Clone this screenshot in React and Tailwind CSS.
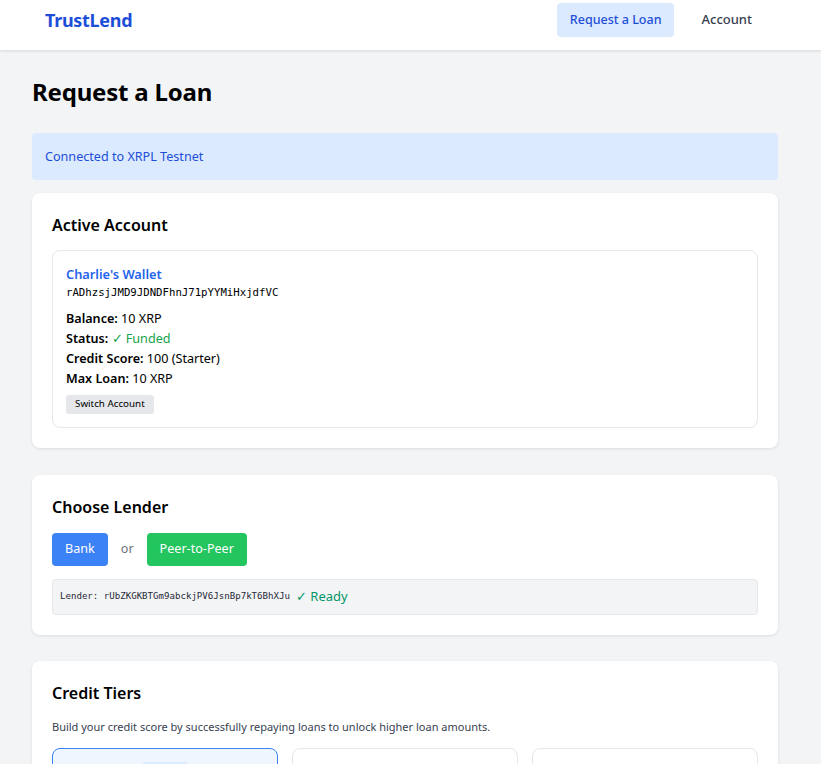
import React from "react";

export default function App() {
  const sans = { fontFamily: '"Noto Sans", "Open Sans", sans-serif' };
  return (
    <div className="min-h-[764px] bg-[#f3f4f6] text-[#111827]" style={sans}>
      <nav className="h-[50px] bg-white shadow-[0_1px_3px_rgba(0,0,0,0.12)] pl-[45px] pr-[53px] pt-[3px] flex items-start justify-between">
        <div className="h-[34px] flex items-center text-[18px] font-bold text-[#1d4ed8] tracking-[-0.3px]">TrustLend</div>
        <div className="flex items-center gap-[11px]">
          <button className="h-[34px] px-[13px] rounded-[4px] bg-[#dbeafe] text-[#1d4ed8] text-[12.5px] font-medium">Request a Loan</button>
          <button className="h-[34px] px-[16px] rounded-[4px] text-[#374151] text-[13px] font-medium">Account</button>
        </div>
      </nav>

      <main className="pl-[32px] w-[778px] pb-10">
        <h1 className="mt-[26px] text-[24px] leading-[32px] font-bold text-black tracking-[-0.2px]">Request a Loan</h1>

        <div className="mt-[25px] h-[47px] rounded-[4px] bg-[#dbeafe] px-[13px] pt-[2px] flex items-center text-[12.6px] text-[#1d4ed8]">
          Connected to XRPL Testnet
        </div>

        <section className="mt-[13px] bg-white rounded-lg shadow-[0_1px_3px_rgba(0,0,0,0.1)] px-[20px] pt-[20px] pb-[20px]">
          <h2 className="text-[16px] leading-[24px] font-semibold text-black">Active Account</h2>
          <div className="mt-[13px] border border-[#e5e7eb] rounded-lg px-[13px] pt-[13px] pb-[13px]">
            <div className="text-[12.8px] leading-[20px] font-semibold text-[#2563eb]">Charlie's Wallet</div>
            <div className="text-[10.7px] leading-[17px] text-black" style={{ fontFamily: '"DejaVu Sans Mono", monospace' }}>rADhzsjJMD9JDNDFhnJ71pYYMiHxjdfVC</div>
            <div className="mt-[8px] text-[12.6px] leading-[20px] text-black">
              <div><span className="font-semibold">Balance:</span> 10 XRP</div>
              <div><span className="font-semibold">Status:</span> <span className="text-[#16a34a]">✓ Funded</span></div>
              <div><span className="font-semibold">Credit Score:</span> 100 (Starter)</div>
              <div><span className="font-semibold">Max Loan:</span> 10 XRP</div>
            </div>
            <button className="mt-[6px] h-[19px] px-[9px] rounded-[3px] bg-[#e5e7eb] text-[9.8px] text-black">Switch Account</button>
          </div>
        </section>

        <section className="mt-[27px] bg-white rounded-lg shadow-[0_1px_3px_rgba(0,0,0,0.1)] px-[20px] pt-[20px] pb-[20px]">
          <h2 className="text-[16px] leading-[24px] font-semibold text-black">Choose Lender</h2>
          <div className="mt-[14px] flex items-center">
            <button className="h-[33px] px-[13px] rounded-[4px] bg-[#3b82f6] text-white text-[12.6px]">Bank</button>
            <span className="mx-[13px] text-[12.6px] text-[#6b7280]">or</span>
            <button className="h-[33px] px-[13px] rounded-[4px] bg-[#22c55e] text-white text-[12.6px]">Peer-to-Peer</button>
          </div>
          <div className="mt-[13px] h-[36px] rounded-[4px] bg-[#f3f4f6] border border-[#e5e7eb] px-[7px] flex items-center gap-[6px]">
            <span className="text-[9.1px] text-[#1f2937]" style={{ fontFamily: '"DejaVu Sans Mono", monospace' }}>Lender: rUbZKGKBTGm9abckjPV6JsnBp7kT6BhXJu</span>
            <span className="text-[13px] text-[#059669]">✓ Ready</span>
          </div>
        </section>

        <section className="mt-[26px] bg-white rounded-lg shadow-[0_1px_3px_rgba(0,0,0,0.1)] px-[20px] pt-[20px] pb-[20px]">
          <h2 className="text-[16px] leading-[24px] font-semibold text-black">Credit Tiers</h2>
          <p className="mt-[14px] text-[11px] leading-[16px] text-[#374151]">Build your credit score by successfully repaying loans to unlock higher loan amounts.</p>
          <div className="mt-[13px] grid grid-cols-3 gap-[14px]">
            <div className="h-[120px] rounded-lg border border-[#3b82f6] bg-[#eff6ff] pt-[13px] flex justify-center">
              <div className="h-[20px] w-[46px] rounded bg-[#dbeafe]" />
            </div>
            <div className="h-[120px] rounded-lg border border-[#e5e7eb] bg-white" />
            <div className="h-[120px] rounded-lg border border-[#e5e7eb] bg-white" />
          </div>
        </section>
      </main>
    </div>
  );
}
